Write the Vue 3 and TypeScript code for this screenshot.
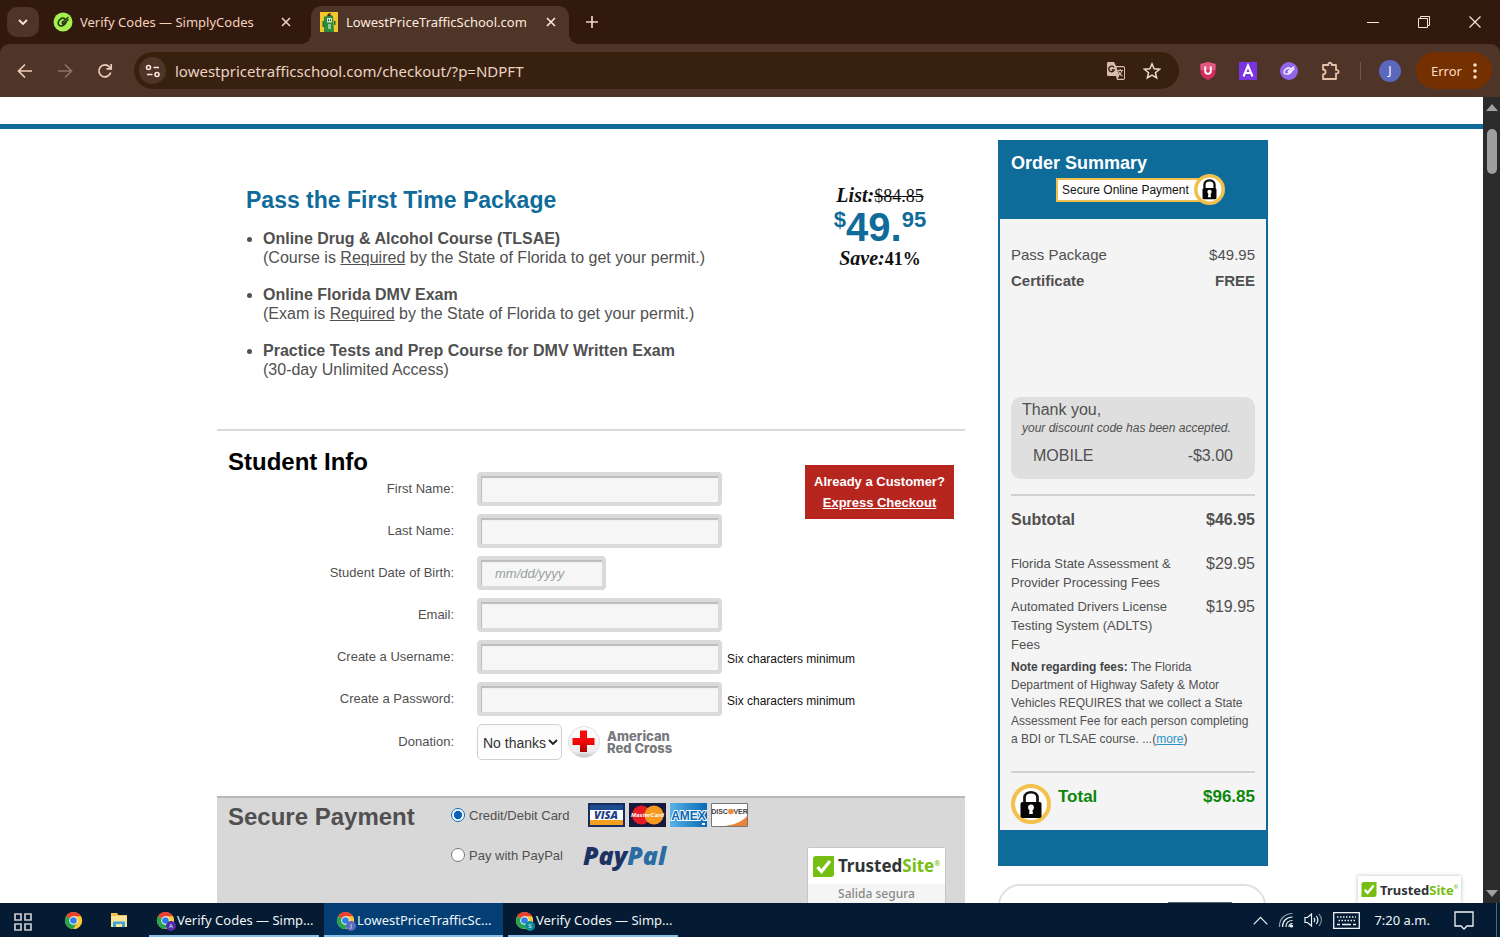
<script setup lang="ts">
import { ref } from 'vue'

interface Feature {
  title: string
  before: string
  underlined: string
  after: string
}

interface Field {
  id: string
  label: string
  type: string
  placeholder?: string
  hint?: string
  short?: boolean
}

interface Task {
  title: string
  active: boolean
  letter: string
  badge: string
}

const features: Feature[] = [
  { title: 'Online Drug & Alcohol Course (TLSAE)', before: '(Course is ', underlined: 'Required', after: ' by the State of Florida to get your permit.)' },
  { title: 'Online Florida DMV Exam', before: '(Exam is ', underlined: 'Required', after: ' by the State of Florida to get your permit.)' },
  { title: 'Practice Tests and Prep Course for DMV Written Exam', before: '(30-day Unlimited Access)', underlined: '', after: '' },
]

const fields: Field[] = [
  { id: 'first-name', label: 'First Name:', type: 'text' },
  { id: 'last-name', label: 'Last Name:', type: 'text' },
  { id: 'birth-date', label: 'Student Date of Birth:', type: 'text', placeholder: 'mm/dd/yyyy', short: true },
  { id: 'email', label: 'Email:', type: 'email' },
  { id: 'username', label: 'Create a Username:', type: 'text', hint: 'Six characters minimum' },
  { id: 'password', label: 'Create a Password:', type: 'password', hint: 'Six characters minimum' },
]

const fees = [
  { name: 'Florida State Assessment & Provider Processing Fees', price: '$29.95' },
  { name: 'Automated Drivers License Testing System (ADLTS) Fees', price: '$19.95' },
]

const tasks: Task[] = [
  { title: 'Verify Codes — Simp...', active: false, letter: 'A', badge: 'violet' },
  { title: 'LowestPriceTrafficSc...', active: true, letter: 'J', badge: 'indigo' },
  { title: 'Verify Codes — Simp...', active: false, letter: 'S', badge: 'teal' },
]

const address = ref('lowestpricetrafficschool.com/checkout/?p=NDPFT')
const values = ref<Record<string, string>>({})
const donation = ref('No thanks')
const payment = ref('card')
</script>

<template>
  <div class="desktop">
    <header class="tabs">
      <button class="tab-search" aria-label="Search tabs">
        <svg width="12" height="12" viewBox="0 0 12 12"><path d="M2 4 6 8l4-4" fill="none" stroke="currentColor" stroke-width="1.900" /></svg>
      </button>
      <div class="tab">
        <svg class="favicon" width="20" height="20" viewBox="0 0 20 20">
          <circle cx="10" cy="10" r="9.500" fill="#a4f04f" />
          <path d="M11.500 6.500C8.500 5.200 5 8.500 5.200 11.500c.3 3.500 6 3.300 8-1.500M15 5.500 9.500 10c-.9.9.2 2 1.200 1.300L15 7.800" fill="none" stroke="#27380f" stroke-width="1.600" stroke-linecap="round" stroke-linejoin="round" />
        </svg>
        <span class="tab-title">Verify Codes — SimplyCodes</span>
        <button class="tab-close" aria-label="Close tab"><svg width="10" height="10" viewBox="0 0 10 10"><path d="m1 1 8 8M9 1 1 9" stroke="currentColor" stroke-width="1.600" /></svg></button>
      </div>
      <div class="tab active">
        <svg class="favicon" width="18" height="20" viewBox="0 0 18 20">
          <path d="M0 0h18v20H0z" fill="#f5c62c" />
          <path d="M4 4.500 13 4l1 16H4z" fill="#2e8b3d" />
          <path d="M7 4.500C7 2 9 1 11 1L10 3l3 1z" fill="#273c22" />
          <path d="M7 6h5v4.500H7z" fill="#c9e5c4" /><path d="M8 7.500h1V9H8zM10 7.500h1V9h-1z" fill="#234" />
          <path d="M8 12h3v5H8z" fill="#8fc796" /><path d="M2.500 9H4v6H2.500zM14 9h1.500v4H14z" fill="#1f6b30" />
        </svg>
        <span class="tab-title">LowestPriceTrafficSchool.com</span>
        <button class="tab-close" aria-label="Close tab"><svg width="10" height="10" viewBox="0 0 10 10"><path d="m1 1 8 8M9 1 1 9" stroke="currentColor" stroke-width="1.600" /></svg></button>
      </div>
      <button class="new-tab" aria-label="New tab"><svg width="12" height="12" viewBox="0 0 12 12"><path d="M6 0v12M0 6h12" stroke="currentColor" stroke-width="1.700" /></svg></button>
      <div class="window-buttons">
        <button aria-label="Minimize"><svg width="12" height="12" viewBox="0 0 12 12"><path d="M0 6.500h12" stroke="currentColor" /></svg></button>
        <button aria-label="Restore"><svg width="12" height="12" viewBox="0 0 12 12"><path d="M.5 2.500h9v9h-9zM2.500 2V.5h9v9H10" fill="none" stroke="currentColor" /></svg></button>
        <button aria-label="Close"><svg width="12" height="12" viewBox="0 0 12 12"><path d="m.5.5 11 11M11.500.5l-11 11" stroke="currentColor" stroke-width="1.200" /></svg></button>
      </div>
    </header>

    <nav class="toolbar">
      <button class="nav" aria-label="Back"><svg width="16" height="16" viewBox="0 0 16 16"><path d="M15 8H2M8 1.500 1.500 8 8 14.500" fill="none" stroke="currentColor" stroke-width="1.700" /></svg></button>
      <button class="nav dim" aria-label="Forward"><svg width="16" height="16" viewBox="0 0 16 16"><path d="M1 8h13M8 1.500 14.500 8 8 14.500" fill="none" stroke="currentColor" stroke-width="1.700" /></svg></button>
      <button class="nav" aria-label="Reload"><svg width="16" height="16" viewBox="0 0 16 16"><path d="M13.700 9.500A6 6 0 1 1 12.500 4L14 5.500M14.200 1v4.800H9.500" fill="none" stroke="currentColor" stroke-width="1.700" /></svg></button>
      <div class="omnibox">
        <button class="site-info" aria-label="View site information">
          <svg width="16" height="14" viewBox="0 0 16 14" fill="none" stroke="currentColor" stroke-width="1.600"><circle cx="3.500" cy="3.500" r="2" /><path d="M8.500 3.500H14M2 10.500h5.500" /><circle cx="12" cy="10.500" r="2" /></svg>
        </button>
        <input v-model="address" class="address" type="text" aria-label="Address" />
        <button class="plain" aria-label="Translate">
          <svg width="20" height="20" viewBox="0 0 20 20"><path d="M2 1h6l2 4h7a2 2 0 0 1 2 2v10a2 2 0 0 1-2 2h-6l-1-4H2a1.500 1.500 0 0 1-1-1.500V2.500A1.500 1.500 0 0 1 2 1z" fill="#d8bdae" /><path d="M10.500 6.200h6.700a.8.8 0 0 1 .8.8v10a.8.8 0 0 1-.8.8h-5.500l1.500-3z" fill="#38200f" /><path d="M11.500 9.500H17M14.200 8v1.500M16 9.500c-.5 2.500-2 3.800-3.500 4.800M12.500 10.500c.7 2 2 3.500 4 4.500" stroke="#d8bdae" stroke-width="1.100" fill="none" /><path d="M8 6.500A2.800 2.800 0 1 0 8.200 9H5.800" stroke="#38200f" stroke-width="1.400" fill="none" /></svg>
        </button>
        <button class="plain" aria-label="Bookmark this tab"><svg width="18" height="18" viewBox="0 0 18 18"><path d="m9 1.800 2.100 4.900 5.400.5-4.100 3.500 1.300 5.300L9 13.200 4.300 16l1.300-5.300-4.100-3.500 5.400-.5z" fill="none" stroke="#f0d9ca" stroke-width="1.500" /></svg></button>
      </div>
      <div class="extensions">
        <button class="plain" aria-label="Shield extension"><svg width="16" height="20" viewBox="0 0 16 20"><path d="M8 1 15.500 3v8c0 4-4 6.500-7.500 8C4.500 17.500.5 15 .5 11V3z" fill="#d32d60" /><path d="M8 1 15.500 3v6H.5V3z" fill="#e4577f" /><path d="M5.200 5.500V10a2.800 2.800 0 0 0 5.600 0V5.500" fill="none" stroke="#fff" stroke-width="1.900" /></svg></button>
        <button class="plain" aria-label="Letter extension"><svg width="18" height="18" viewBox="0 0 18 18"><path d="M0 0h18v18H0z" fill="#7c33e6" /><path d="m4.500 14.500 4.500-11 4.500 11M6.200 11h5.600" fill="none" stroke="#fff" stroke-width="2.100" /></svg></button>
        <button class="plain" aria-label="SimplyCodes extension"><svg width="18" height="18" viewBox="0 0 18 18"><circle cx="9" cy="9" r="9" fill="#9264ea" /><path d="M10 6.200C7 5.200 4 8 4 10.200c0 2.800 6 2.700 7.800-1.200M13.800 5 8.500 9c-.6.800.5 1.600 1.400 1L14 7" fill="none" stroke="#fff" stroke-width="1.300" stroke-linecap="round" stroke-linejoin="round" /></svg></button>
        <button class="plain" aria-label="Extensions"><svg width="20" height="20" viewBox="0 0 20 20"><path d="M2 4h5.300c-.5-3 3.900-3 3.400 0H15v5c3.500-.6 3.500 4 0 3.500V18H2v-4.500c3.500-.4 3.500-4.600 0-5z" fill="none" stroke="#e7c0a8" stroke-width="1.800" stroke-linejoin="round" /></svg></button>
      </div>
      <button class="avatar" aria-label="Profile">J</button>
      <button class="error">Error <svg width="4" height="16" viewBox="0 0 4 16" fill="currentColor"><circle cx="2" cy="2" r="1.800" /><circle cx="2" cy="8" r="1.800" /><circle cx="2" cy="14" r="1.800" /></svg></button>
    </nav>

    <div class="viewport">
      <div class="page">
        <div class="content">
          <main class="main">
            <section class="package">
              <div>
                <h2 class="package-title">Pass the First Time Package</h2>
                <ul class="features">
                  <li v-for="f in features" :key="f.title"><strong>{{ f.title }}</strong><span>{{ f.before }}<u v-if="f.underlined">{{ f.underlined }}</u>{{ f.after }}</span></li>
                </ul>
              </div>
              <div class="price">
                <div class="price-note"><em>List:</em><s>$84.85</s></div>
                <div class="amount"><span class="small">$</span>49.<span class="small">95</span></div>
                <div class="price-note"><em>Save:</em><b>41%</b></div>
              </div>
            </section>

            <section class="student">
              <form class="student-form">
                <h2 class="heading">Student Info</h2>
                <div v-for="f in fields" :key="f.id" class="row">
                  <label :for="f.id">{{ f.label }}</label>
                  <div class="control">
                    <input :id="f.id" v-model="values[f.id]" class="text-box" :class="{ short: f.short }" :type="f.type" :placeholder="f.placeholder" />
                    <span v-if="f.hint" class="hint">{{ f.hint }}</span>
                  </div>
                </div>
                <div class="row">
                  <label for="donation">Donation:</label>
                  <div class="control">
                    <div class="select-wrap">
                      <select id="donation" v-model="donation"><option>No thanks</option><option>$1.00</option><option>$5.00</option></select>
                      <svg class="caret" width="10" height="7" viewBox="0 0 10 7"><path d="m1 1 4 4 4-4" fill="none" stroke="#222" stroke-width="1.900" /></svg>
                    </div>
                    <div class="red-cross">
                      <svg width="34" height="34" viewBox="0 0 34 34">
                        <defs>
                          <linearGradient id="cross-disc" x1="0" y1="0" x2="0" y2="1"><stop offset="0" stop-color="#fff" /><stop offset=".8" stop-color="#eee" /><stop offset="1" stop-color="#bbb" /></linearGradient>
                          <linearGradient id="cross-red" x1="0" y1="0" x2="0" y2="1"><stop offset=".5" stop-color="#f50b0b" /><stop offset="1" stop-color="#a80000" /></linearGradient>
                        </defs>
                        <circle cx="17" cy="17" r="15.500" fill="url(#cross-disc)" stroke="#dfdfdf" />
                        <path d="M13 5.500h7v7.500h7.500v7H20v7h-7v-7H5.500v-7H13z" fill="url(#cross-red)" />
                      </svg>
                      <span>American<br />Red Cross</span>
                    </div>
                  </div>
                </div>
              </form>
              <a class="express" href="#login">Already a Customer?<br /><u>Express Checkout</u></a>
            </section>

            <section class="secure">
              <h2 class="heading">Secure Payment</h2>
              <div class="methods">
                <div class="method">
                  <input id="pay-card" v-model="payment" type="radio" name="payment" value="card" />
                  <label for="pay-card">Credit/Debit Card</label>
                  <div class="cards">
                    <svg width="37" height="24" viewBox="0 0 37 24"><path d="M0 0h37v24H0z" fill="#182c60" /><path d="M2 2h33v5H2z" fill="#1c4b8f" /><path d="M2 7h33v10H2z" fill="#fff" /><path d="M2 17h33v5H2z" fill="#f5a01e" /><text x="18" y="16" text-anchor="middle" font-family="Open Sans, sans-serif" font-size="11" font-weight="800" font-style="italic" fill="#1c3f86">VISA</text></svg>
                    <svg width="37" height="24" viewBox="0 0 37 24"><path d="M0 0h37v24H0z" fill="#16183c" /><circle cx="12.500" cy="12" r="9.500" fill="#e51c23" /><circle cx="25" cy="12" r="9.500" fill="#f59a1f" /><text x="18.500" y="14" text-anchor="middle" font-family="Liberation Sans, sans-serif" font-size="6" font-weight="700" font-style="italic" fill="#fff">MasterCard</text></svg>
                    <svg width="37" height="24" viewBox="0 0 37 24"><defs><linearGradient id="amex-blue"><stop stop-color="#58b3e8" /><stop offset="1" stop-color="#0a69b5" /></linearGradient></defs><path d="M0 0h37v24H0z" fill="url(#amex-blue)" /><text x="18.500" y="17" text-anchor="middle" font-family="Liberation Sans, sans-serif" font-size="12" font-weight="700" fill="#0868b3" stroke="#fff" stroke-width="2" paint-order="stroke">AMEX</text><path d="M32 20h3v2h-3z" fill="#fff" /></svg>
                    <svg width="37" height="24" viewBox="0 0 37 24"><path d="M.5.5h36v23H.5z" fill="#fff" stroke="#777" /><path d="M12 23c10-.5 19-4 24-10v10z" fill="#ec823a" /><text x="18.500" y="11" text-anchor="middle" font-family="Liberation Sans, sans-serif" font-size="7" font-weight="700" fill="#444">DISC<tspan fill="#ee8d3c">O</tspan>VER</text><circle cx="20" cy="8.500" r="2.700" fill="#ee8d3c" /></svg>
                  </div>
                </div>
                <div class="method">
                  <input id="pay-paypal" v-model="payment" type="radio" name="payment" value="paypal" />
                  <label for="pay-paypal">Pay with PayPal</label>
                  <div class="paypal"><span>Pay</span><span class="pal">Pal</span></div>
                </div>
                <input class="text-box next" type="text" aria-label="Card holder" />
              </div>
              <a class="seal" href="#trusted">
                <span class="trusted">
                  <svg width="21" height="21" viewBox="0 0 21 21"><path d="M3 0h18v18a3 3 0 0 1-3 3H0V3a3 3 0 0 1 3-3z" fill="#76be11" /><path d="m4.500 11 4 4.500L17 5" fill="none" stroke="#fff" stroke-width="3.200" /></svg>
                  <span>Trusted<i>Site</i></span><sup>®</sup>
                </span>
                <span class="seal-note">Salida segura</span>
              </a>
            </section>
          </main>

          <aside class="side">
            <section class="summary">
              <header class="summary-head">
                <h2>Order Summary</h2>
                <div class="secure-tag">
                  <span>Secure Online Payment</span>
                  <svg width="31" height="31" viewBox="0 0 40 40"><circle cx="20" cy="20" r="17.700" fill="#fff" stroke="#efc04c" stroke-width="4.600" /><path d="M13.500 19v-5.500c0-7 13-7 13 0V19" fill="none" stroke="#111" stroke-width="3" /><rect x="11" y="18" width="18" height="14.500" rx="2" fill="#050505" /><circle cx="20" cy="23" r="2.800" fill="#fff" /><path d="M18.800 23h2.400l.8 7h-4z" fill="#fff" /></svg>
                </div>
              </header>
              <div class="summary-body">
                <div class="items">
                  <div class="line"><span>Pass Package</span><span>$49.95</span></div>
                  <div class="line strong"><span>Certificate</span><span>FREE</span></div>
                </div>
                <div class="discount">
                  <p>Thank you,</p>
                  <em>your discount code has been accepted.</em>
                  <div class="line code"><span>MOBILE</span><span>-$3.00</span></div>
                </div>
                <div class="line subtotal"><span>Subtotal</span><span>$46.95</span></div>
                <div v-for="fee in fees" :key="fee.name" class="line fee"><span class="fee-name">{{ fee.name }}</span><span>{{ fee.price }}</span></div>
                <p class="note"><strong>Note regarding fees:</strong> The Florida Department of Highway Safety &amp; Motor Vehicles REQUIRES that we collect a State Assessment Fee for each person completing a BDI or TLSAE course. ...(<a href="#more">more</a>)</p>
                <div class="total">
                  <svg width="40" height="40" viewBox="0 0 40 40"><circle cx="20" cy="20" r="18" fill="#fff" stroke="#f2c14e" stroke-width="4" /><path d="M13.500 19v-5.500c0-7 13-7 13 0V19" fill="none" stroke="#111" stroke-width="2.700" /><rect x="9.500" y="18" width="21" height="16" rx="2" fill="#050505" /><circle cx="20" cy="23.500" r="2.900" fill="#fff" /><path d="M18.900 23h2.200l.8 7h-3.800z" fill="#fff" /></svg>
                  <span>Total</span><span class="sum">$96.85</span>
                </div>
              </div>
            </section>
            <section class="next-card"><div class="next-picture"></div></section>
          </aside>
        </div>
        <a class="floating-seal trusted compact" href="#trusted">
          <svg width="16" height="15" viewBox="0 0 21 21"><path d="M3 0h18v18a3 3 0 0 1-3 3H0V3a3 3 0 0 1 3-3z" fill="#76be11" /><path d="m4.500 11 4 4.500L17 5" fill="none" stroke="#fff" stroke-width="3.200" /></svg>
          <span>Trusted<i>Site</i></span><sup>®</sup>
        </a>
      </div>
      <div class="scrollbar">
        <svg width="12" height="7" viewBox="0 0 12 7"><path d="m6 0 6 7H0z" fill="#a0a0a0" /></svg>
        <div class="thumb"></div>
        <svg width="12" height="7" viewBox="0 0 12 7"><path d="m6 7 6-7H0z" fill="#a0a0a0" /></svg>
      </div>
    </div>

    <footer class="taskbar">
      <button class="launcher" aria-label="Task view"><svg width="18" height="20" viewBox="0 0 18 20"><path d="M1 2h6v6H1zM11 2h6v6h-6zM1 12h6v6H1zM11 12h6v6h-6z" fill="none" stroke="#c9c9cb" stroke-width="1.700" /></svg></button>
      <button class="launcher" aria-label="Chrome">
        <svg width="19" height="19" viewBox="0 0 20 20"><circle cx="10" cy="10" r="9" fill="#fcc934" /><path d="M10 10 2.200 5.500A9 9 0 0 1 17.800 5.500z" fill="#e8412f" /><path d="M2.200 5.500A9 9 0 0 0 10 19l4-7-4-2z" fill="#2aa351" /><path d="M10 5.500h7.800A9 9 0 0 1 10 19l4-7z" fill="#fcc934" /><circle cx="10" cy="10" r="4.500" fill="#fff" /><circle cx="10" cy="10" r="3.500" fill="#2f7de9" /></svg>
      </button>
      <button class="launcher" aria-label="File Explorer"><svg width="18" height="16" viewBox="0 0 18 16"><path d="M1 1h6l1.500 2H17v12H1z" fill="#efc44f" /><path d="M1 4h16v11H1z" fill="#fbe495" /><path d="M3 15V9.500h12V15h-3v-3H6v3z" fill="#3fa5d5" /></svg></button>
      <div class="tasks">
        <button v-for="(t, i) in tasks" :key="i" class="task" :class="{ active: t.active }">
          <span class="task-icon">
            <svg width="19" height="19" viewBox="0 0 20 20"><circle cx="10" cy="10" r="9" fill="#fcc934" /><path d="M10 10 2.200 5.500A9 9 0 0 1 17.800 5.500z" fill="#e8412f" /><path d="M2.200 5.500A9 9 0 0 0 10 19l4-7-4-2z" fill="#2aa351" /><path d="M10 5.500h7.800A9 9 0 0 1 10 19l4-7z" fill="#fcc934" /><circle cx="10" cy="10" r="4.500" fill="#fff" /><circle cx="10" cy="10" r="3.500" fill="#2f7de9" /></svg>
            <span class="badge" :class="t.badge">{{ t.letter }}</span>
          </span>
          <span class="task-title">{{ t.title }}</span>
        </button>
      </div>
      <div class="tray">
        <svg width="15" height="9" viewBox="0 0 15 9"><path d="m.7 8.300 6.800-7 6.800 7" fill="none" stroke="currentColor" stroke-width="1.200" /></svg>
        <svg width="16" height="16" viewBox="0 0 16 16" fill="none" stroke="currentColor" stroke-width="1.200"><path d="M1.500 15C1 7 7 1.500 14.500 1.500" opacity=".6" /><path d="M4.500 15c0-6 4-10 10-10M8 15c0-4 2.500-6.500 6.500-6.500M11 15c0-2 1.500-3.500 3.500-3.500" /><circle cx="13.500" cy="14" r="1" fill="currentColor" /></svg>
        <svg width="19" height="16" viewBox="0 0 19 16" fill="none" stroke="currentColor" stroke-width="1.200"><path d="M1 5.500h2.500l4-3.500v12l-4-3.500H1z" /><path d="M10 6c1 1.200 1 2.800 0 4M12.300 4c2 2.500 2 5.500 0 8" /><path d="M15 2c3.200 3.500 3.200 8.500 0 12" opacity=".5" /></svg>
        <svg width="27" height="17" viewBox="0 0 27 17" fill="none" stroke="currentColor"><path d="M.7.7h25.600v15.600H.7z" stroke-width="1.300" /><path d="M4 5h19M5.500 8.500h17" stroke-width="1.300" stroke-dasharray="1.500 1.500" /><path d="M4 12.500h3M9 12.500h9M20 12.500h3" stroke-width="1.500" /></svg>
        <time>7:20 a.m.</time>
        <svg width="20" height="19" viewBox="0 0 20 19"><path d="M1 1h18v14h-6l-3 3-3-3H1z" fill="none" stroke="currentColor" stroke-width="1.300" /></svg>
        <span class="show-desktop"></span>
      </div>
    </footer>
  </div>
</template>

<style>
body { margin: 0; overflow: hidden; }
</style>

<style scoped>
* { box-sizing: border-box; }
h2, p, ul { margin: 0; padding: 0; }
button { border: 0; padding: 0; background: none; color: inherit; font: inherit; display: flex; align-items: center; justify-content: center; flex-shrink: 0; }
svg { display: block; flex-shrink: 0; }
.desktop { height: 100vh; display: flex; flex-direction: column; background: #32190e; font-family: "Liberation Sans", Arial, sans-serif; font-size: 16px; color: #505050; }

.tabs { height: 44px; flex-shrink: 0; display: flex; align-items: center; color: #f3d2bf; font-family: "Noto Sans", "Open Sans", sans-serif; font-size: 13px; padding-left: 7px; }
.tab-search { width: 32px; height: 30px; border-radius: 10px; background: #4e3527; color: #fbe6da; margin-right: 4px; }
.tab { display: flex; align-items: center; width: 268px; height: 38px; padding: 0 20px 6px 10px; gap: 7px; align-self: flex-end; }
.tab.active { position: relative; width: 258px; padding: 0 13px 6px 9px; gap: 8px; background: #4e3527; color: #fdeadf; border-radius: 10px 10px 0 0; }
.tab.active::before, .tab.active::after { content: ""; position: absolute; bottom: 0; width: 10px; height: 10px; }
.tab.active::before { left: -10px; background: radial-gradient(circle at 0 0, transparent 10px, #4e3527 10px); }
.tab.active::after { right: -10px; background: radial-gradient(circle at 100% 0, transparent 10px, #4e3527 10px); }
.tab-title { flex: 1; white-space: nowrap; overflow: hidden; line-height: 20px; }
.new-tab { width: 46px; height: 30px; }
.window-buttons { margin-left: auto; display: flex; }
.window-buttons button { width: 51px; height: 44px; color: #f7e5da; }

.toolbar { height: 53px; flex-shrink: 0; display: flex; align-items: center; background: #4e3527; border-radius: 9px 9px 0 0; color: #f1cdb8; font-family: "Noto Sans", "Open Sans", sans-serif; padding: 0 8px 0 5px; }
.nav { width: 40px; height: 34px; }
.dim { color: #8d7163; }
.omnibox { flex: 1; height: 37px; margin-left: 9px; border-radius: 19px; background: #38200f; display: flex; align-items: center; padding: 0 18px 0 5px; gap: 17px; }
.site-info { width: 27px; height: 27px; border-radius: 50%; background: #4e3527; color: #fbe6da; margin-right: -8px; }
.address { flex: 1; min-width: 0; border: 0; outline: 0; padding: 0; background: none; color: #e9d3c6; font-family: "Noto Sans", "Open Sans", sans-serif; font-size: 15px; }
.extensions { display: flex; align-items: center; gap: 23px; padding: 0 19px 0 21px; border-right: 1px solid #765747; height: 18px; }
.avatar { width: 22px; height: 22px; border-radius: 50%; background: #5b68bd; color: #fff; font-size: 12px; margin: 0 15px 0 18px; }
.error { width: 76px; height: 37px; border-radius: 19px; background: #743000; color: #ffdcc5; font-size: 13px; gap: 11px; }

.viewport { flex: 1; min-height: 0; display: flex; }
.page { flex: 1; min-width: 0; overflow: hidden; position: relative; background: #fff; padding-top: 27px; }
.page::before { content: ""; display: block; height: 5px; background: #0f6b9a; }
.content { max-width: 1053px; margin: 11px auto 0; padding-left: 2px; display: flex; gap: 33px; align-items: flex-start; }
.main { flex: 1; min-width: 0; }

.package { display: flex; justify-content: space-between; padding: 46px 35px 50px 29px; }
.package-title { color: #0f6b9a; font-size: 23px; line-height: 28px; }
.features { list-style: none; margin-top: 15px; display: flex; flex-direction: column; gap: 18px; line-height: 19px; }
.features li { display: grid; grid-template-columns: 17px 1fr; }
.features li::before { content: ""; width: 5px; height: 5px; border-radius: 50%; background: #505050; margin: 8px 0 0 1px; }
.features li span { grid-column: 2; }
.price { width: 100px; margin-top: -1px; text-align: center; color: #111; font-family: Georgia, "Liberation Serif", serif; white-space: nowrap; }
.price-note { font-size: 18px; line-height: 20px; }
.price-note em { font-size: 20px; font-weight: 700; }
.amount { display: flex; justify-content: center; align-items: flex-start; font: 700 40px/42px "Liberation Sans", Arial, sans-serif; color: #0f6b9a; }
.small { font-size: 22px; line-height: 28px; }

.student { border-top: 2px solid #dadada; display: grid; padding: 19px 11px 36px; }
.student-form { grid-area: 1 / 1; display: flex; flex-direction: column; }
.heading { font-size: 24px; line-height: 24px; color: #000; }
.student .heading { margin-bottom: -2px; }
.row { display: grid; grid-template-columns: 226px 1fr; column-gap: 23px; align-items: center; margin-bottom: 8px; font-size: 13px; }
.row:last-child { margin-bottom: 0; }
.row label { text-align: right; line-height: 16px; }
.control { display: flex; align-items: center; gap: 5px; }
.text-box { width: 245px; height: 34px; border: 4px solid #dadada; border-radius: 4px; background: #f6f6f6; box-shadow: inset 1px 2px 1px #bcbcbc; padding: 0 14px; font: 14px "Liberation Sans", Arial, sans-serif; outline: 0; }
.text-box.short { width: 129px; }
.text-box::placeholder { color: #969f9f; font-style: italic; font-size: 13px; }
.hint { font-size: 12px; color: #111; white-space: nowrap; line-height: 16px; padding-top: 4px; }
.select-wrap { position: relative; width: 85px; }
select { appearance: none; width: 100%; height: 36px; border: 1px solid #d0d0d0; border-radius: 5px; background: linear-gradient(#fafafa, #fff); font: 14px "Liberation Sans", Arial, sans-serif; color: #333; padding: 2px 0 0 5px; outline: 0; }
.caret { position: absolute; right: 4px; top: 15px; pointer-events: none; }
.red-cross { display: flex; align-items: center; gap: 6px; font: 800 13px/12px Inter, "Liberation Sans", sans-serif; color: #77787b; }
.express { grid-area: 1 / 1; justify-self: end; align-self: start; margin-top: 15px; width: 149px; height: 54px; padding-top: 6px; background: #b7251f; color: #fff; font-size: 13px; font-weight: 700; line-height: 21px; text-align: center; text-decoration: none; white-space: nowrap; }

.secure { border-top: 2px solid #b8b8b8; background: #d8d8d8; display: flex; align-items: flex-start; padding: 5px 19px 80px 11px; height: 220px; }
.secure .heading { width: 223px; color: #505050; padding-top: 2px; white-space: nowrap; }
.methods { flex: 1; display: flex; flex-direction: column; gap: 16px; }
.method { display: flex; align-items: center; height: 24px; font-size: 13px; white-space: nowrap; }
.method input { width: 14px; height: 14px; margin: 0 4px 0 0; accent-color: #0a62b5; }
.cards { display: flex; gap: 4px; margin-left: 19px; }
.paypal { margin-left: 20px; font: italic 800 25px/24px "Open Sans", sans-serif; color: #1b3263; }
.pal { color: #2b6ca3; }
.text-box.next { margin: 18px 0 0 26px; }
.seal { width: 139px; margin-top: 44px; background: #f5f5f5; border: 1px solid #c5c5c5; border-radius: 3px; text-decoration: none; text-align: center; }
.trusted { display: flex; align-items: center; justify-content: center; height: 36px; gap: 4px; background: #fff; color: #303436; font: 700 17px/24px "Noto Sans", "Open Sans", sans-serif; text-decoration: none; }
.trusted i { font-style: normal; color: #76be11; }
.trusted sup { font-size: 7px; line-height: 7px; align-self: flex-start; color: #76be11; margin: 12px 0 0 -4px; }
.seal-note { display: block; color: #888; font: 500 12px/20px "Noto Sans", "Open Sans", sans-serif; }

.side { width: 270px; flex-shrink: 0; }
.summary { background: #0f6b9a; padding: 0 2px 36px; }
.summary-head { height: 79px; padding: 13px 11px 0; color: #fff; }
.summary-head h2 { font-size: 18px; line-height: 20px; }
.secure-tag { display: flex; align-items: center; margin: 1px 0 0 45px; }
.secure-tag span { background: #fff; border: 2px solid #efc04c; color: #111; font-size: 12px; line-height: 20px; padding: 0 8px 0 4px; width: 145px; white-space: nowrap; }
.secure-tag svg { margin-left: -7px; }
.summary-body { background: #f4f4f4; padding: 23px 11px 6px; }
.line { display: flex; justify-content: space-between; line-height: 26px; }
.items { font-size: 15px; height: 155px; }
.strong, .subtotal { font-weight: 700; }
.discount { background: #dfdfdf; border-radius: 10px; height: 82px; padding: 3px 11px; }
.discount p { line-height: 20px; }
.discount em { display: block; font-size: 12px; line-height: 16px; white-space: nowrap; }
.code { padding: 7px 11px 0; }
.subtotal { border-top: 2px solid #d0d0d0; margin-top: 15px; padding-top: 10px; line-height: 28px; margin-bottom: 20px; }
.fee { line-height: 19px; margin-bottom: 5px; }
.fee-name { font-size: 13px; width: 165px; }
.note { font-size: 12px; line-height: 18px; margin-top: -1px; }
.note strong { color: #444; }
.note a { color: #2a93c9; }
.total { border-top: 2px solid #d0d0d0; margin-top: 23px; padding-top: 11px; display: flex; gap: 7px; font-size: 17px; line-height: 26px; font-weight: 700; color: #0a870a; }
.sum { margin-left: auto; }
.next-card { height: 120px; margin: 18px 2px 0 0; border: 2px solid #e0e0e0; border-radius: 22px; padding: 16px 32px 0; }
.next-picture { margin-left: auto; width: 64px; height: 40px; background: #52606b; }
.floating-seal { position: absolute; right: 22px; bottom: 0; width: 103px; box-shadow: 0 0 4px #bbb; }
.trusted.compact { height: 27px; gap: 3px; font-size: 13px; }
.compact sup { margin: 8px 0 0 -3px; font-size: 5px; }

.scrollbar { width: 17px; background: #2b2b2b; display: flex; flex-direction: column; align-items: center; padding: 7px 0 6px; }
.thumb { width: 10px; height: 45px; margin: 18px 0 auto; border-radius: 5px; background: #9f9f9f; }

.taskbar { height: 34px; flex-shrink: 0; display: flex; align-items: center; background: #041b33; color: #f0f4f8; font-family: "Noto Sans", "Open Sans", sans-serif; font-size: 13px; }
.launcher { width: 46px; height: 34px; }
.launcher:first-child { width: 50px; padding-right: 4px; margin-top: 4px; }
.tasks { display: flex; gap: 5px; height: 34px; margin-left: 7px; }
.task { width: 170px; padding: 0 8px 0 7px; justify-content: flex-start; gap: 2px; box-shadow: inset 0 -2px #88bde8; }
.task.active { width: 179px; padding-left: 12px; background: #033e75; }
.task-icon { position: relative; }
.badge { position: absolute; right: -1px; bottom: -1px; width: 10px; height: 10px; border-radius: 50%; font-size: 6px; line-height: 10px; text-align: center; }
.violet { background: #512da8; }
.indigo { background: #5c6bc0; }
.teal { background: #0b8c9b; }
.task-title { white-space: nowrap; }
.tray { margin-left: auto; display: flex; align-items: center; height: 34px; }
.tray svg { margin-right: 10px; }
.tray time { margin: 0 24px 0 4px; white-space: nowrap; }
.tray .show-desktop { margin-left: 12px; width: 4px; height: 34px; border-left: 1px solid #53677b; }
</style>
